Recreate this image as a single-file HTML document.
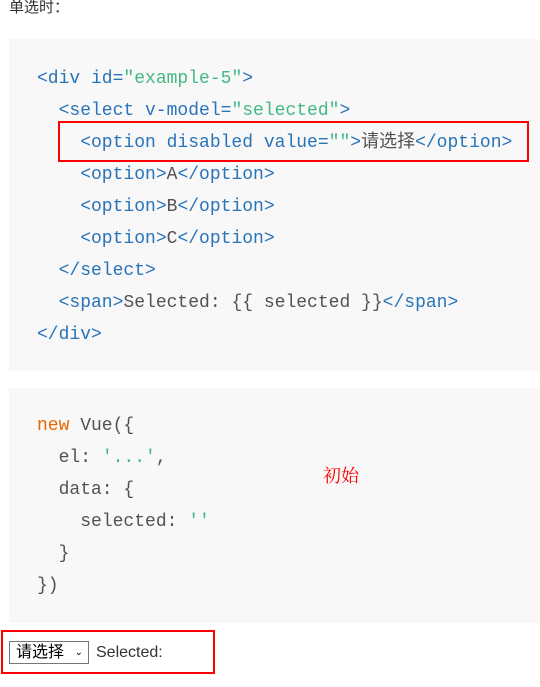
<!DOCTYPE html>
<html><head><meta charset="utf-8"><style>
body{margin:0;width:540px;height:687px;background:#fff;position:relative;overflow:hidden;font-family:"Liberation Sans","Noto Sans CJK SC",sans-serif}
.t{position:absolute;left:9px;top:-4px;font-size:15px;color:#333}
.pre{position:absolute;left:9px;width:531px;background:#f8f8f8}
.l{position:absolute;left:37px;font-family:"Liberation Mono","Noto Sans CJK SC",monospace;font-size:18px;line-height:32px;white-space:pre;color:#525252}
.b{color:#2973b7}.g{color:#42b983}.o{color:#e96900}
.red{position:absolute;border:2px solid #f00;box-sizing:border-box}
</style></head><body>
<div class="t">单选时：</div>
<div class="pre" style="top:39px;height:332px"></div>
<div class="l" style="top:63px"><span class="b">&lt;div id=</span><span class="g">"example-5"</span><span class="b">&gt;</span></div>
<div class="l" style="top:95px"><span class="b">  &lt;select v-model=</span><span class="g">"selected"</span><span class="b">&gt;</span></div>
<div class="l" style="top:127px"><span class="b">    &lt;option disabled value=</span><span class="g">""</span><span class="b">&gt;</span>请选择<span class="b">&lt;/option&gt;</span></div>
<div class="l" style="top:159px"><span class="b">    &lt;option&gt;</span>A<span class="b">&lt;/option&gt;</span></div>
<div class="l" style="top:191px"><span class="b">    &lt;option&gt;</span>B<span class="b">&lt;/option&gt;</span></div>
<div class="l" style="top:223px"><span class="b">    &lt;option&gt;</span>C<span class="b">&lt;/option&gt;</span></div>
<div class="l" style="top:255px"><span class="b">  &lt;/select&gt;</span></div>
<div class="l" style="top:287px"><span class="b">  &lt;span&gt;</span>Selected: {{ selected }}<span class="b">&lt;/span&gt;</span></div>
<div class="l" style="top:319px"><span class="b">&lt;/div&gt;</span></div>
<div class="red" style="left:58px;top:121px;width:471px;height:41px"></div>
<div class="pre" style="top:388px;height:235px"></div>
<div class="l" style="top:410px"><span class="o">new</span> Vue({</div>
<div class="l" style="top:442px">  el: <span class="g">'...'</span>,</div>
<div class="l" style="top:474px">  data: {</div>
<div class="l" style="top:506px">    selected: <span class="g">''</span></div>
<div class="l" style="top:538px">  }</div>
<div class="l" style="top:570px">})</div>
<div style="position:absolute;left:323px;top:462px;font-family:'Noto Serif CJK SC',serif;font-size:18px;color:#f00">初始</div>
<div class="red" style="left:1px;top:630px;width:214px;height:44px"></div>
<div style="position:absolute;left:9px;top:641px;width:80px;height:23px;border:1px solid #767676;box-sizing:border-box;font-size:16px;line-height:21px;padding-left:6px;color:#000">请选择<span style="position:absolute;right:5px;top:0;font-size:10px">&#8964;</span></div>
<div style="position:absolute;left:96px;top:644px;font-size:16px;color:#333">Selected:</div>
</body></html>
